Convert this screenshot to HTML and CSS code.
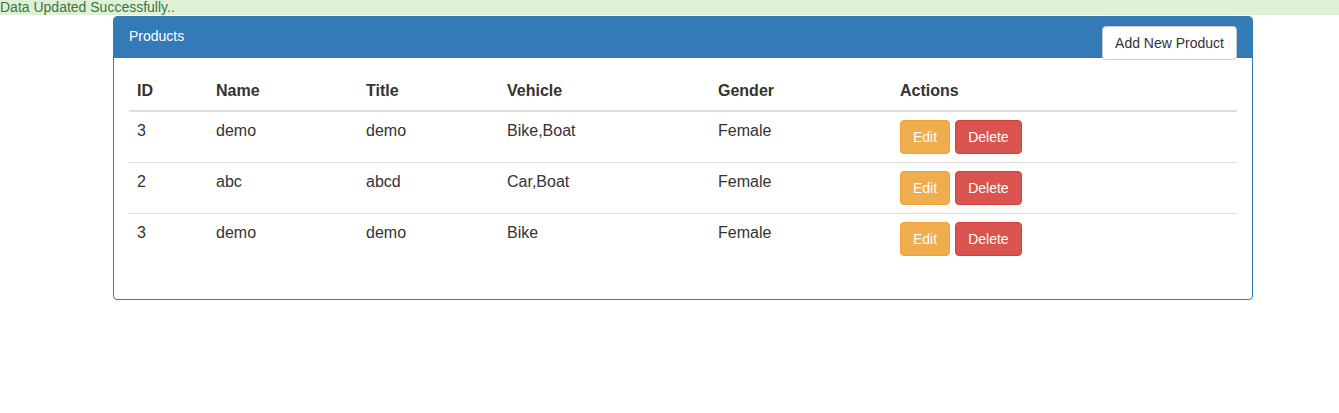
FILE: index.html
```html
<!DOCTYPE html>
<html>
<head>
<meta charset="utf-8">
<link rel="stylesheet" href="styles.css">
</head>
<body>
<div class="alert">Data Updated Successfully..</div>
<div class="wrap">
  <div class="panel">
    <div class="panel-heading">
      <button class="btn btn-default pull-right">Add New Product</button>
      <span class="panel-title">Products</span>
    </div>
    <div class="panel-body">
      <table class="table">
        <colgroup>
          <col class="c-id"><col class="c-name"><col class="c-title"><col class="c-vehicle"><col class="c-gender"><col class="c-actions">
        </colgroup>
        <thead>
          <tr><th>ID</th><th>Name</th><th>Title</th><th>Vehicle</th><th>Gender</th><th>Actions</th></tr>
        </thead>
        <tbody>
          <tr><td>3</td><td>demo</td><td>demo</td><td>Bike,Boat</td><td>Female</td><td><div class="actions"><button class="btn btn-warning">Edit</button><button class="btn btn-danger">Delete</button></div></td></tr>
          <tr><td>2</td><td>abc</td><td>abcd</td><td>Car,Boat</td><td>Female</td><td><div class="actions"><button class="btn btn-warning">Edit</button><button class="btn btn-danger">Delete</button></div></td></tr>
          <tr><td>3</td><td>demo</td><td>demo</td><td>Bike</td><td>Female</td><td><div class="actions"><button class="btn btn-warning">Edit</button><button class="btn btn-danger">Delete</button></div></td></tr>
        </tbody>
      </table>
    </div>
  </div>
</div>
</body>
</html>
```
FILE: styles.css
```css
* { box-sizing: border-box; }
html, body { margin: 0; padding: 0; background: #fff; }
body {
  font-family: "Liberation Sans", Arial, Helvetica, sans-serif;
  font-size: 14px;
  color: #333;
}
.alert {
  height: 15px;
  line-height: 15px;
  background: #dff0d8;
  color: #3c763d;
  font-size: 14px;
  white-space: nowrap;
}
.wrap {
  padding-left: 113px;
  padding-top: 1px;
}
.panel {
  width: 1140px;
  border: 1px solid #337ab7;
  border-radius: 4px;
  background: #fff;
}
.panel-heading {
  background: #337ab7;
  color: #fff;
  padding: 9px 15px 11px;
  height: 41px;
  border-radius: 3px 3px 0 0;
  line-height: 20px;
}
.panel-title { font-size: 14px; }
.pull-right { float: right; }
.panel-body { padding: 15px; }
.btn {
  font-family: "Liberation Sans", Arial, Helvetica, sans-serif;
  font-size: 14px;
  line-height: 20px;
  padding: 6px 12px;
  border: 1px solid transparent;
  border-radius: 4px;
  height: 34px;
  cursor: pointer;
}
.btn-default {
  background: #fff;
  border-color: #ccc;
  color: #333;
  position: relative;
}
.btn-warning { background: #f0ad4e; border-color: #eea236; color: #fff; }
.btn-danger { background: #d9534f; border-color: #d43f3a; color: #fff; }
.table {
  width: 100%;
  margin-bottom: 20px;
  border-collapse: collapse;
  border-spacing: 0;
  table-layout: fixed;
  font-size: 16px;
}
.c-id { width: 79px; }
.c-name { width: 150px; }
.c-title { width: 141px; }
.c-vehicle { width: 211px; }
.c-gender { width: 182px; }
.c-actions { width: 345px; }
.table th, .table td {
  padding: 8px;
  text-align: left;
  vertical-align: top;
}
.table th {
  font-weight: bold;
  line-height: 20px;
  padding-bottom: 9px;
  border-bottom: 2px solid #ddd;
  vertical-align: bottom;
}
.table td {
  line-height: 22px;
  border-top: 1px solid #ddd;
}
.actions { display: flex; gap: 5px; }
```
